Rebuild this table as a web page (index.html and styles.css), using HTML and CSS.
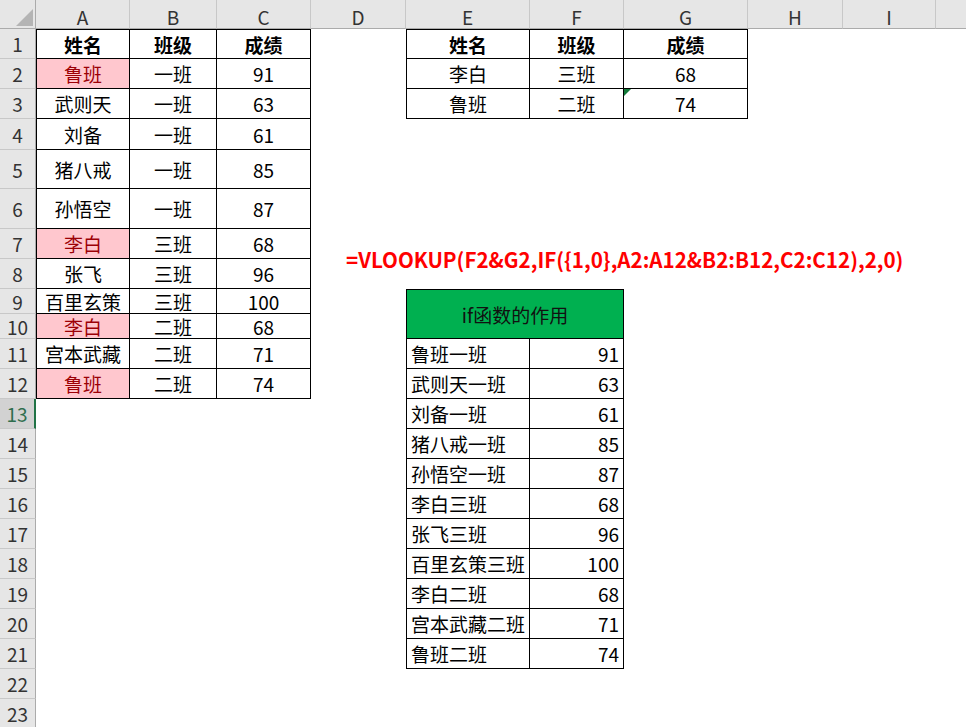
FILE: index.html
```html
<!DOCTYPE html>
<html lang="zh-CN">
<head>
<meta charset="utf-8">
<title>VLOOKUP</title>
<link rel="stylesheet" href="styles.css">
</head>
<body>
<div class="sheet">
  <div class="corner"><svg width="36" height="29" viewBox="0 0 36 29"><polygon points="33,9 33,26 16,26" fill="#b4b4b4"/></svg></div>
  <div class="c ch">A</div><div class="c ch">B</div><div class="c ch">C</div><div class="c ch">D</div><div class="c ch">E</div><div class="c ch">F</div><div class="c ch">G</div><div class="c ch">H</div><div class="c ch">I</div><div class="c ch"></div>

  <div class="c rh">1</div>
  <div class="c t tt tl b">姓名</div><div class="c t tt b">班级</div><div class="c t tt b">成绩</div><div></div>
  <div class="c t tt tl b">姓名</div><div class="c t tt b">班级</div><div class="c t tt b">成绩</div>

  <div class="c rh">2</div>
  <div class="c t tl dup">鲁班</div><div class="c t">一班</div><div class="c t">91</div><div></div>
  <div class="c t tl">李白</div><div class="c t">三班</div><div class="c t">68</div>

  <div class="c rh">3</div>
  <div class="c t tl">武则天</div><div class="c t">一班</div><div class="c t">63</div><div></div>
  <div class="c t tl">鲁班</div><div class="c t">二班</div><div class="c t err">74</div>

  <div class="c rh">4</div>
  <div class="c t tl">刘备</div><div class="c t">一班</div><div class="c t">61</div>

  <div class="c rh">5</div>
  <div class="c t tl">猪八戒</div><div class="c t">一班</div><div class="c t">85</div>

  <div class="c rh">6</div>
  <div class="c t tl">孙悟空</div><div class="c t">一班</div><div class="c t">87</div>

  <div class="c rh">7</div>
  <div class="c t tl dup">李白</div><div class="c t">三班</div><div class="c t">68</div>

  <div class="c rh">8</div>
  <div class="c t tl">张飞</div><div class="c t">三班</div><div class="c t">96</div>

  <div class="c rh">9</div>
  <div class="c t tl">百里玄策</div><div class="c t">三班</div><div class="c t">100</div><div></div>
  <div class="c t tt tl hdr">if函数的作用</div>

  <div class="c rh">10</div>
  <div class="c t tl dup">李白</div><div class="c t">二班</div><div class="c t">68</div>

  <div class="c rh">11</div>
  <div class="c t tl">宫本武藏</div><div class="c t">二班</div><div class="c t">71</div><div></div>
  <div class="c t tl l">鲁班一班</div><div class="c t r">91</div>

  <div class="c rh">12</div>
  <div class="c t tl dup">鲁班</div><div class="c t">二班</div><div class="c t">74</div><div></div>
  <div class="c t tl l">武则天一班</div><div class="c t r">63</div>

  <div class="c rh sel">13</div>
  <div></div><div></div><div></div><div></div>
  <div class="c t tl l">刘备一班</div><div class="c t r">61</div>

  <div class="c rh">14</div>
  <div></div><div></div><div></div><div></div>
  <div class="c t tl l">猪八戒一班</div><div class="c t r">85</div>

  <div class="c rh">15</div>
  <div></div><div></div><div></div><div></div>
  <div class="c t tl l">孙悟空一班</div><div class="c t r">87</div>

  <div class="c rh">16</div>
  <div></div><div></div><div></div><div></div>
  <div class="c t tl l">李白三班</div><div class="c t r">68</div>

  <div class="c rh">17</div>
  <div></div><div></div><div></div><div></div>
  <div class="c t tl l">张飞三班</div><div class="c t r">96</div>

  <div class="c rh">18</div>
  <div></div><div></div><div></div><div></div>
  <div class="c t tl l">百里玄策三班</div><div class="c t r">100</div>

  <div class="c rh">19</div>
  <div></div><div></div><div></div><div></div>
  <div class="c t tl l">李白二班</div><div class="c t r">68</div>

  <div class="c rh">20</div>
  <div></div><div></div><div></div><div></div>
  <div class="c t tl l">宫本武藏二班</div><div class="c t r">71</div>

  <div class="c rh">21</div>
  <div></div><div></div><div></div><div></div>
  <div class="c t tl l">鲁班二班</div><div class="c t r">74</div>

  <div class="c rh">22</div>
  <div class="c rh">23</div>

  <div class="formula">=VLOOKUP(F2&amp;G2,IF({1,0},A2:A12&amp;B2:B12,C2:C12),2,0)</div>
</div>
</body>
</html>
```

FILE: styles.css
```css
* {
  box-sizing: border-box;
  margin: 0;
  padding: 0;
}

html, body {
  width: 966px;
  height: 727px;
  overflow: hidden;
  background: #fff;
}

body {
  font-family: "Noto Sans CJK SC", "Microsoft YaHei", sans-serif;
  color: #000;
}

.sheet {
  position: relative;
  display: grid;
  grid-template-columns: 36px 94px 87px 94px 95px 124px 94px 124px 95px 93px 60px;
  grid-template-rows: 29px 30px 30px 30px 31px 39px 40px 30px 30px 25px 25px 30px 30px repeat(11, 30px);
  font-size: 19px;
  line-height: 1;
}

.c {
  display: flex;
  align-items: center;
  justify-content: center;
  white-space: nowrap;
}

.corner {
  background: #e6e6e6;
  border-right: 1px solid #ababab;
  border-bottom: 1px solid #ababab;
}

.corner svg {
  display: block;
}

.ch {
  background: #e6e6e6;
  border-right: 1px solid #c8c8c8;
  border-bottom: 1px solid #ababab;
  color: #333;
  padding-top: 5px;
}

.rh {
  grid-column: 1;
  background: #e6e6e6;
  border-bottom: 1px solid #c8c8c8;
  border-right: 1px solid #ababab;
  color: #333;
}

.rh.sel {
  background: #d2d2d2;
  color: #2f6e4e;
  border-right: 2px solid #217346;
}

.t {
  border-right: 1px solid #000;
  border-bottom: 1px solid #000;
}

.tt {
  border-top: 1px solid #000;
}

.tl {
  border-left: 1px solid #000;
}

.b {
  font-weight: bold;
}

.dup {
  background: #ffc7ce;
  color: #9c0006;
}

.hdr {
  grid-column: span 2;
  grid-row: span 2;
  background: #00b050;
  color: #111;
}

.l {
  justify-content: flex-start;
  padding-left: 4px;
}

.r {
  justify-content: flex-end;
  padding-right: 4px;
}

.err {
  position: relative;
}

.err::before {
  content: "";
  position: absolute;
  left: 0;
  top: 0;
  border-top: 7px solid #137a3a;
  border-right: 7px solid transparent;
}

.formula {
  position: absolute;
  left: 346px;
  top: 247px;
  color: #f00;
  font-weight: bold;
  font-size: 20.6px;
  line-height: 24px;
  white-space: nowrap;
}
```
